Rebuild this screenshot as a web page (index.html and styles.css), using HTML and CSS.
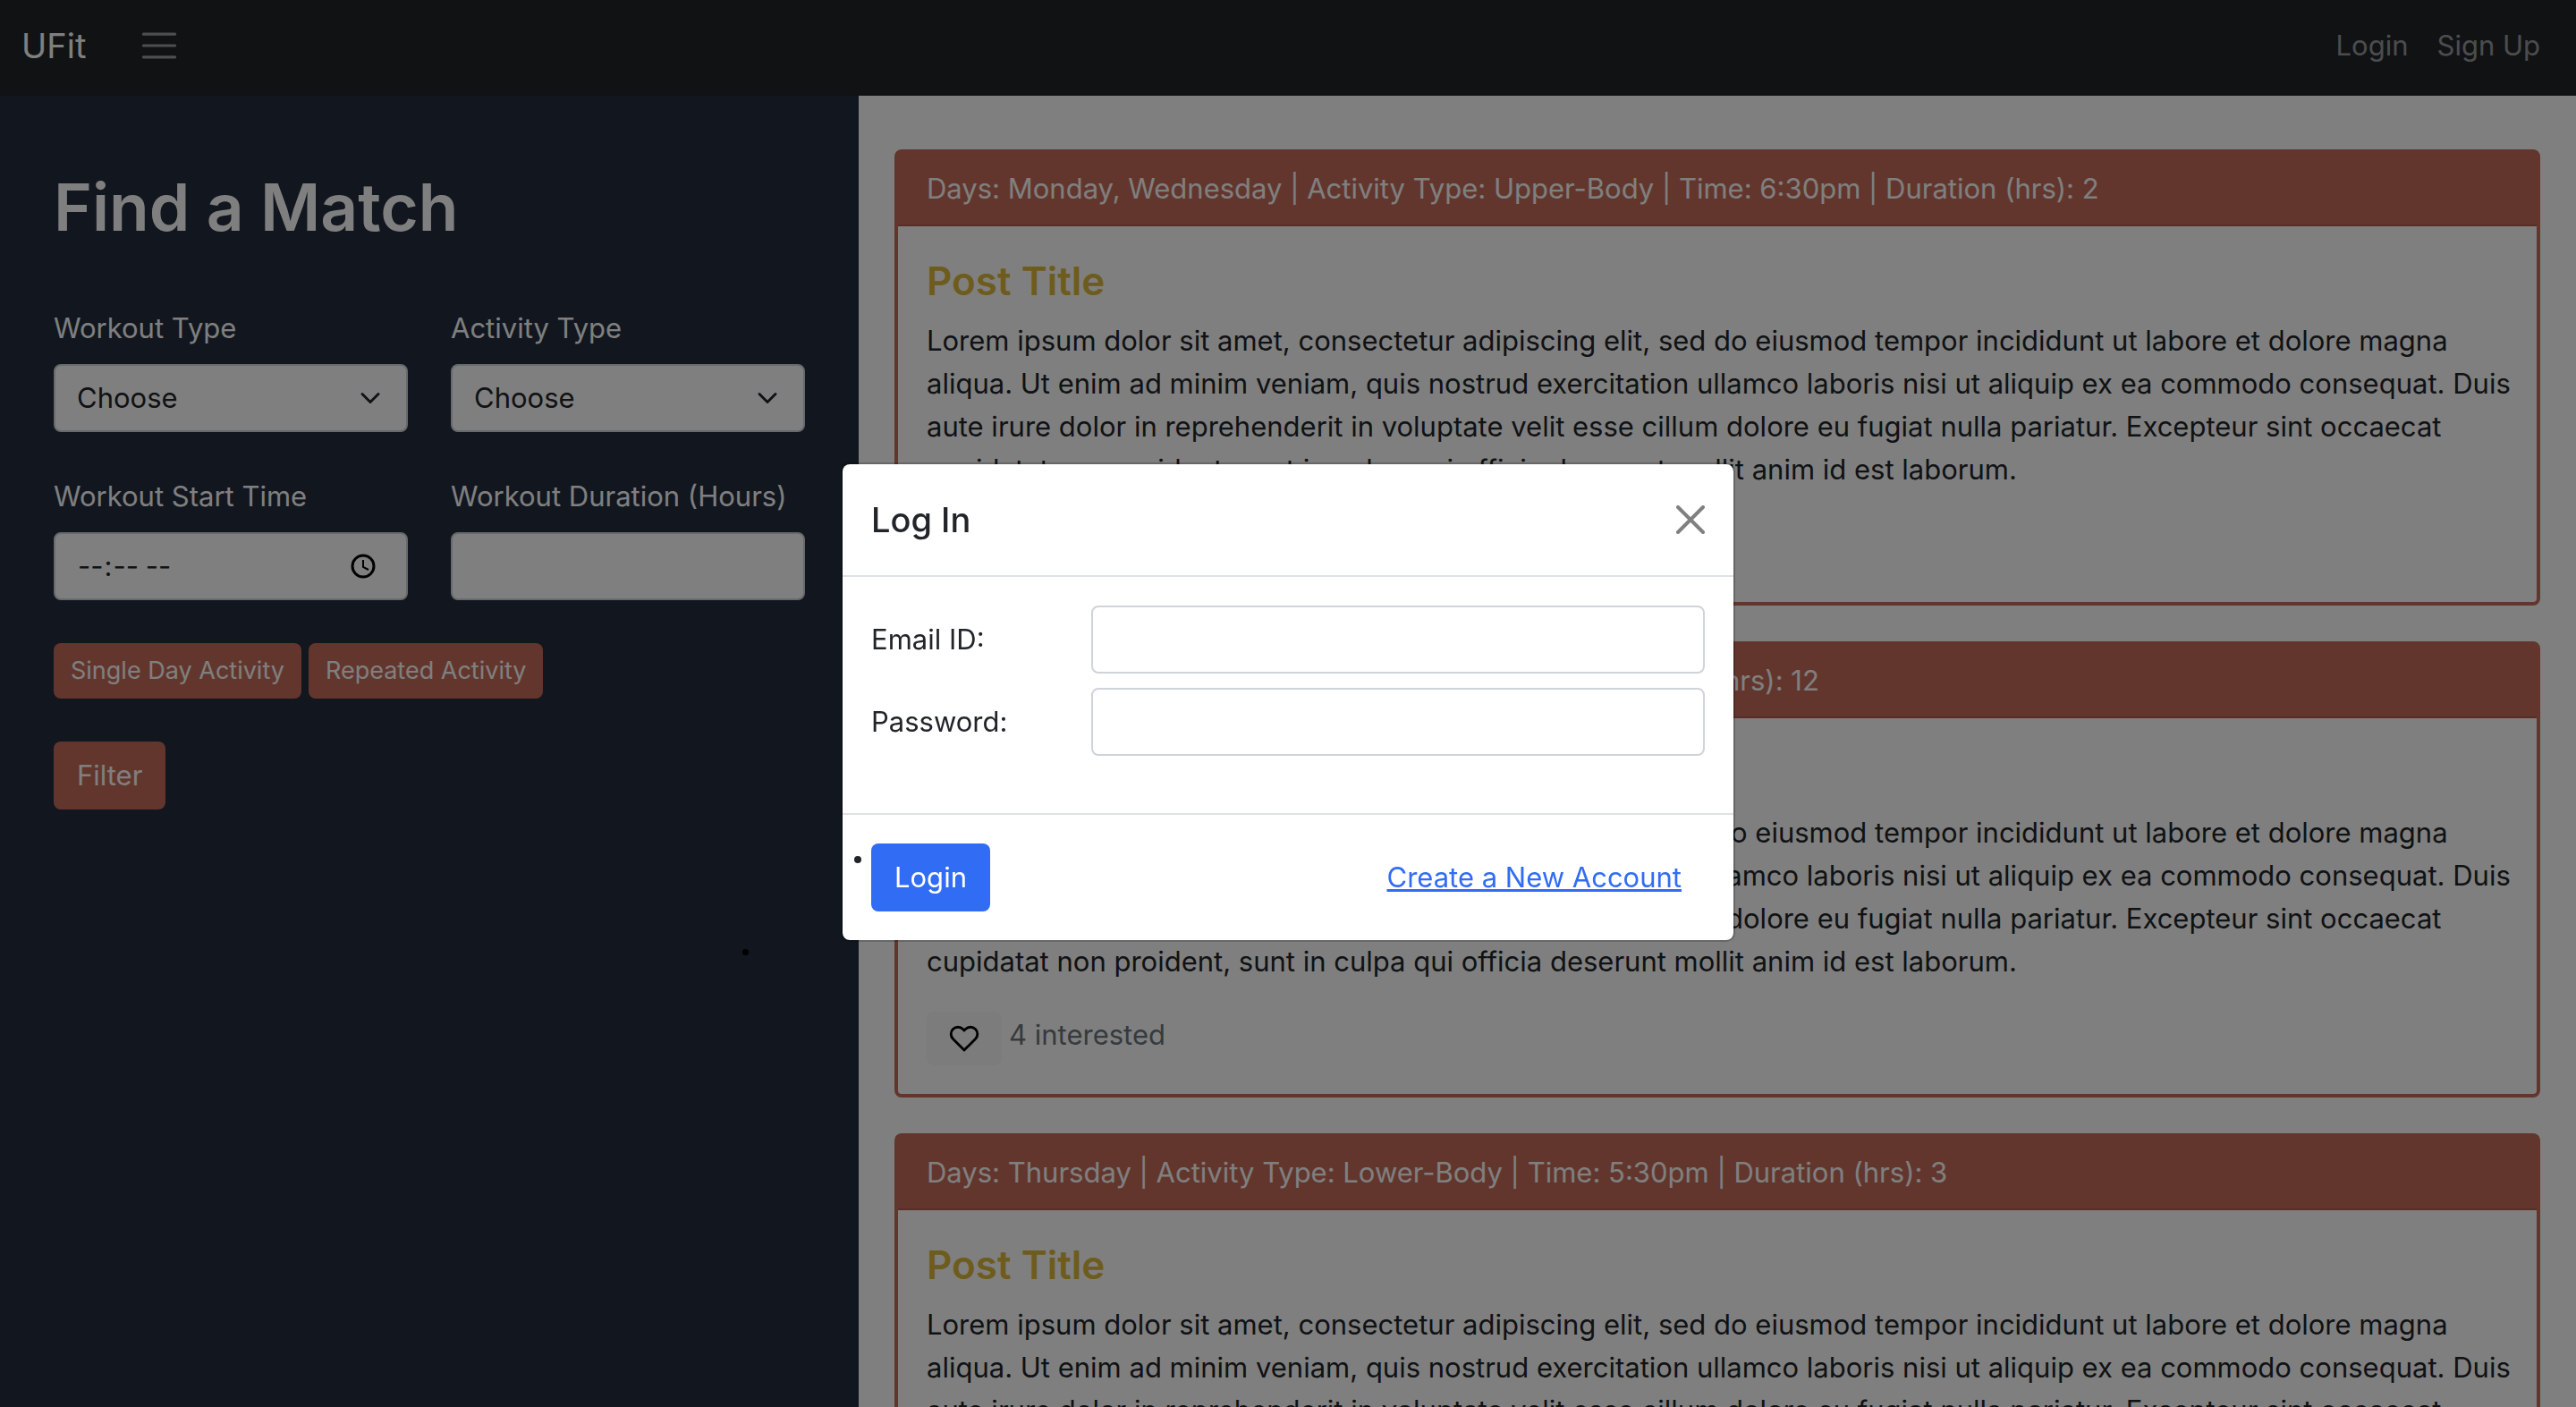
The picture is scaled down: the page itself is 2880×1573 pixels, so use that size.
FILE: index.html
```html
<!DOCTYPE html>
<html lang="en">
<head>
<meta charset="utf-8">
<title>UFit</title>
<meta name="viewport" content="width=device-width, initial-scale=1">
<link rel="stylesheet" href="styles.css">
</head>
<body>
<header class="navbar">
  <a class="brand" href="#">UFit</a>
  <button class="menu-toggle" type="button" aria-label="Menu">
    <svg viewBox="0 0 30 30" fill="none" stroke="currentColor" stroke-width="2" stroke-linecap="round" stroke-miterlimit="10"><path d="M4 7h22M4 15h22M4 23h22"/></svg>
  </button>
  <nav class="nav-links">
    <a href="#">Login</a>
    <a href="#">Sign Up</a>
  </nav>
</header>

<main class="layout">
  <aside class="sidebar">
    <h1>Find a Match</h1>
    <form>
      <div class="filters">
        <div class="field">
          <label for="workout">Workout Type</label>
          <span class="select-wrap">
            <select class="control" id="workout"><option>Choose</option></select>
            <svg viewBox="0 0 16 16" fill="none" stroke="currentColor" stroke-linecap="round" stroke-linejoin="round" stroke-width="2"><path d="M2 5l6 6 6-6"/></svg>
          </span>
        </div>
        <div class="field">
          <label for="activity">Activity Type</label>
          <span class="select-wrap">
            <select class="control" id="activity"><option>Choose</option></select>
            <svg viewBox="0 0 16 16" fill="none" stroke="currentColor" stroke-linecap="round" stroke-linejoin="round" stroke-width="2"><path d="M2 5l6 6 6-6"/></svg>
          </span>
        </div>
        <div class="field">
          <label for="start">Workout Start Time</label>
          <span class="select-wrap time">
            <input class="control" id="start" type="time">
            <svg viewBox="0 0 28 28" fill="none" stroke="currentColor" stroke-width="3"><circle cx="14" cy="14" r="12"/><path stroke-width="2" d="M14 7v8l6 3"/></svg>
          </span>
        </div>
        <div class="field">
          <label for="duration">Workout Duration (Hours)</label>
          <input class="control" id="duration" type="text">
        </div>
      </div>
      <div class="toggles">
        <button class="btn btn-accent btn-sm" type="button">Single Day Activity</button>
        <button class="btn btn-accent btn-sm" type="button">Repeated Activity</button>
      </div>
      <button class="btn btn-accent" type="button">Filter</button>
    </form>
    <ul class="results"><li></li></ul>
  </aside>

  <section class="posts">
    <article class="card">
      <div class="card-header">Days: Monday, Wednesday | Activity Type: Upper-Body | Time: 6:30pm | Duration (hrs): 2</div>
      <div class="card-body">
        <h2>Post Title</h2>
        <p>Lorem ipsum dolor sit amet, consectetur adipiscing elit, sed do eiusmod tempor incididunt ut labore et dolore magna aliqua. Ut enim ad minim veniam, quis nostrud exercitation ullamco laboris nisi ut aliquip ex ea commodo consequat. Duis aute irure dolor in reprehenderit in voluptate velit esse cillum dolore eu fugiat nulla pariatur. Excepteur sint occaecat cupidatat non proident, sunt in culpa qui officia deserunt mollit anim id est laborum.</p>
        <div class="interest">
          <button class="like" type="button" aria-label="Interested"><svg viewBox="0 0 24 24" fill="none" stroke="currentColor" stroke-width="2" stroke-linecap="round" stroke-linejoin="round"><path d="M20.84 4.61a5.5 5.5 0 0 0-7.78 0L12 5.67l-1.06-1.06a5.5 5.5 0 0 0-7.78 7.78l1.06 1.06L12 21.23l7.78-7.78 1.06-1.06a5.5 5.5 0 0 0 0-7.78z"/></svg></button>
          <span>4 interested</span>
        </div>
      </div>
    </article>
    <article class="card">
      <div class="card-header">Days: Friday | Activity Type: Core | Time: 5:30pm | Duration (hrs): 12</div>
      <div class="card-body">
        <h2>Post Title</h2>
        <p>Lorem ipsum dolor sit amet, consectetur adipiscing elit, sed do eiusmod tempor incididunt ut labore et dolore magna aliqua. Ut enim ad minim veniam, quis nostrud exercitation ullamco laboris nisi ut aliquip ex ea commodo consequat. Duis aute irure dolor in reprehenderit in voluptate velit esse cillum dolore eu fugiat nulla pariatur. Excepteur sint occaecat cupidatat non proident, sunt in culpa qui officia deserunt mollit anim id est laborum.</p>
        <div class="interest">
          <button class="like" type="button" aria-label="Interested"><svg viewBox="0 0 24 24" fill="none" stroke="currentColor" stroke-width="2" stroke-linecap="round" stroke-linejoin="round"><path d="M20.84 4.61a5.5 5.5 0 0 0-7.78 0L12 5.67l-1.06-1.06a5.5 5.5 0 0 0-7.78 7.78l1.06 1.06L12 21.23l7.78-7.78 1.06-1.06a5.5 5.5 0 0 0 0-7.78z"/></svg></button>
          <span>4 interested</span>
        </div>
      </div>
    </article>
    <article class="card">
      <div class="card-header">Days: Thursday | Activity Type: Lower-Body | Time: 5:30pm | Duration (hrs): 3</div>
      <div class="card-body">
        <h2>Post Title</h2>
        <p>Lorem ipsum dolor sit amet, consectetur adipiscing elit, sed do eiusmod tempor incididunt ut labore et dolore magna aliqua. Ut enim ad minim veniam, quis nostrud exercitation ullamco laboris nisi ut aliquip ex ea commodo consequat. Duis aute irure dolor in reprehenderit in voluptate velit esse cillum dolore eu fugiat nulla pariatur. Excepteur sint occaecat cupidatat non proident, sunt in culpa qui officia deserunt mollit anim id est laborum.</p>
      </div>
    </article>
  </section>
</main>

<div class="backdrop">
  <div class="modal" role="dialog" aria-labelledby="modal-title">
    <div class="modal-header">
      <h2 id="modal-title">Log In</h2>
      <button class="close" type="button" aria-label="Close"><svg viewBox="0 0 16 16" fill="none" stroke="currentColor" stroke-width="2" stroke-linecap="round"><path d="M1 1l14 14M15 1L1 15"/></svg></button>
    </div>
    <form class="modal-body">
      <label for="email">Email ID:</label>
      <input class="control" id="email" type="email">
      <label for="password">Password:</label>
      <input class="control" id="password" type="password">
    </form>
    <ul class="modal-footer">
      <li>
        <button class="btn btn-primary" type="button">Login</button>
        <a class="create" href="#">Create a New Account</a>
      </li>
    </ul>
  </div>
</div>
</body>
</html>
```
FILE: styles.css
```css
* {
  box-sizing: border-box;
}

body {
  margin: 0;
  height: 100vh;
  overflow: hidden;
  display: flex;
  flex-direction: column;
  font: 400 31px/48px Inter, "Liberation Sans", sans-serif;
  color: #212529;
  background: #fff;
}

h1,
h2,
p,
ul {
  margin: 0;
  padding: 0;
}

button,
input,
select {
  font: inherit;
  color: inherit;
}

svg {
  display: block;
}

.navbar {
  display: flex;
  align-items: center;
  flex: none;
  height: 107px;
  padding: 0 40px 5px 24px;
  background: #212529;
}

.navbar a {
  color: rgba(255, 255, 255, .55);
  text-decoration: none;
}

.navbar .brand {
  font-size: 38px;
  color: #fff;
}

.menu-toggle {
  margin-left: 58px;
  padding: 0;
  border: 0;
  background: none;
  color: rgba(255, 255, 255, .55);
}

.menu-toggle svg {
  width: 48px;
  height: 48px;
}

.nav-links {
  display: flex;
  gap: 32px;
  margin-left: auto;
}

.layout {
  display: grid;
  grid-template-columns: 1fr 2fr;
  flex: 1;
  min-height: 0;
}

.sidebar {
  padding: 78px 60px;
  background: #222c3e;
  color: #fff;
}

.sidebar h1 {
  margin-bottom: 64px;
  font-size: 73px;
  font-weight: 600;
  line-height: 94px;
}

.filters {
  display: grid;
  grid-template-columns: 1fr 1fr;
  gap: 48px;
}

.field label {
  display: block;
  margin-bottom: 16px;
  white-space: nowrap;
}

.control {
  display: block;
  width: 100%;
  height: 76px;
  padding: 0 24px;
  border: 2px solid #ced4da;
  border-radius: 8px;
  background: #fff;
  color: #212529;
  appearance: none;
}

.control::-webkit-calendar-picker-indicator {
  opacity: 0;
}

.select-wrap {
  display: grid;
  align-items: center;
}

.select-wrap > * {
  grid-area: 1 / 1;
}

.select-wrap svg {
  justify-self: end;
  width: 24px;
  height: 24px;
  margin-right: 30px;
  color: #212529;
  pointer-events: none;
}

.time svg {
  width: 28px;
  height: 28px;
  margin-right: 36px;
  color: #000;
}

.btn {
  height: 76px;
  padding: 0 26px;
  border: 0;
  border-radius: 8px;
  color: #fff;
}

.btn-accent {
  background: #c66c5a;
}

.btn-primary {
  background: #316cf4;
}

.btn-sm {
  height: 62px;
  padding: 0 19px;
  font-size: 27px;
}

.toggles {
  display: flex;
  gap: 8px;
  margin: 48px 0;
}

.results {
  margin-top: 156px;
  padding-left: 770px;
  list-style: none;
}

.results li {
  width: 7px;
  height: 7px;
  border-radius: 50%;
  background: #000;
}

.posts {
  padding: 60px 40px 0;
}

.card {
  margin-bottom: 40px;
  border: 4px solid #c66c5a;
  border-radius: 8px;
}

.card-header {
  padding: 16px 32px;
  border-bottom: 2px solid #ad5d4f;
  background: #c66c5a;
  color: #fff;
}

.card-body {
  padding: 32px 20px 32px 32px;
}

.card h2 {
  margin-bottom: 14px;
  font-size: 44px;
  font-weight: 600;
  line-height: 58px;
  color: #dcb93c;
}

.card p {
  margin-bottom: 32px;
}

.interest {
  display: flex;
  gap: 8px;
  line-height: 52px;
  color: #6c757d;
}

.like {
  height: 60px;
  padding: 0 25px;
  border: 0;
  border-radius: 8px;
  background: #f8f9fa;
  color: #000;
}

.like svg {
  width: 34px;
  height: 34px;
}

.backdrop {
  position: fixed;
  inset: 0;
  display: flex;
  align-items: center;
  justify-content: center;
  padding-bottom: 4px;
  background: rgba(0, 0, 0, .5);
}

.modal {
  width: 1000px;
  border: 2px solid rgba(0, 0, 0, .2);
  border-radius: 10px;
  background: #fff;
  background-clip: padding-box;
}

.modal-header {
  display: flex;
  align-items: center;
  justify-content: space-between;
  padding: 32px;
  border-bottom: 2px solid #dee2e6;
}

.modal-header h2 {
  font-size: 38px;
  font-weight: 500;
  line-height: 60px;
}

.close {
  padding: 0;
  border: 0;
  background: none;
  color: #808080;
}

.close svg {
  width: 32px;
  height: 32px;
}

.modal-body {
  display: grid;
  grid-template-columns: 246px 1fr;
  gap: 16px 0;
  align-items: center;
  padding: 32px 32px 64px;
}

.modal-footer {
  padding: 32px;
  border-top: 2px solid #dee2e6;
}

.modal-footer li {
  position: relative;
  display: flex;
  align-items: center;
  justify-content: space-between;
}

.modal-footer li::before {
  content: "";
  position: absolute;
  left: -19px;
  top: 14px;
  width: 8px;
  height: 8px;
  border-radius: 50%;
  background: #212529;
}

.create {
  margin-right: 26px;
  color: #316cf4;
}
```
